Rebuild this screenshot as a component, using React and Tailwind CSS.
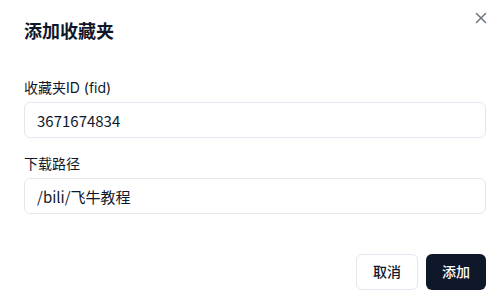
import { X } from 'lucide-react';

function Field({ label, value }) {
  return (
    <div className="flex flex-col gap-1">
      <label className="text-sm leading-5 text-[#0f172a]">{label}</label>
      <input
        type="text"
        defaultValue={value}
        className="h-9 w-full rounded-md border border-[#e2e8f0] bg-white px-3 font-['Noto_Sans_CJK_SC',sans-serif] text-[15px] text-[#0f172a] outline-none"
      />
    </div>
  );
}

export default function App() {
  return (
    <div
      className="relative h-[308px] w-[501px] overflow-hidden bg-white pl-6 pr-[15px] pt-[18px]"
      style={{ fontFamily: 'Inter, "Noto Sans CJK SC", sans-serif' }}
    >
      <button className="absolute right-[11px] top-[9px] text-[#4b5563] opacity-80">
        <X size={18} strokeWidth={2} />
      </button>

      <h2 className="text-lg font-bold leading-7 text-[#0f172a]">添加收藏夹</h2>

      <div className="mt-8 flex flex-col gap-4">
        <Field label="收藏夹ID (fid)" value="3671674834" />
        <Field label="下载路径" value="/bili/飞牛教程" />
      </div>

      <div className="mt-10 flex justify-end gap-2">
        <button className="h-9 rounded-md border border-[#e2e8f0] bg-white px-4 text-sm font-medium text-[#0f172a]">
          取消
        </button>
        <button className="h-9 rounded-md bg-[#0f172a] px-4 text-sm font-medium text-white">
          添加
        </button>
      </div>
    </div>
  );
}
